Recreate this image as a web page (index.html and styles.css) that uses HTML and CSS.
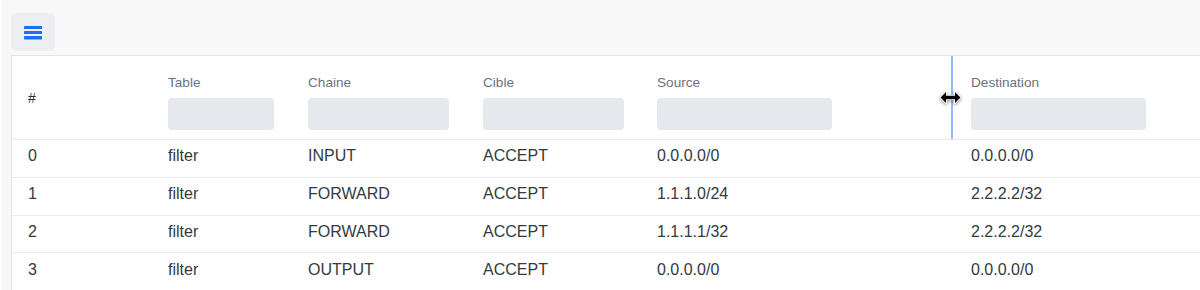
FILE: index.html
```html
<!DOCTYPE html>
<html lang="fr">
<head>
<meta charset="utf-8">
<title>Règles</title>
<link rel="stylesheet" href="styles.css">
</head>
<body>
<div class="page">
  <div class="toolbar">
    <button class="menu-btn" type="button" aria-label="Menu">
      <svg width="18" height="14" viewBox="0 0 18 14" aria-hidden="true">
        <rect x="0" y="0" width="18" height="3" rx="0.6" fill="#1d6ff2"/>
        <rect x="0" y="5" width="18" height="3" rx="0.6" fill="#1d6ff2"/>
        <rect x="0" y="10" width="18" height="3.4" rx="0.6" fill="#1d6ff2"/>
      </svg>
    </button>
  </div>
  <div class="table-wrap">
    <table class="rules">
      <colgroup>
        <col class="c-num"><col class="c-table"><col class="c-chain"><col class="c-target"><col class="c-source"><col class="c-dest">
      </colgroup>
      <thead>
        <tr>
          <th class="th-num">#</th>
          <th><div class="label">Table</div><div class="filter f-table"></div></th>
          <th><div class="label">Chaine</div><div class="filter f-chain"></div></th>
          <th><div class="label">Cible</div><div class="filter f-target"></div></th>
          <th class="th-resize"><div class="label">Source</div><div class="filter f-source"></div>
            <span class="resizer"></span>
            <svg class="cursor" width="23" height="15" viewBox="0 0 23 15" aria-hidden="true">
              <path d="M1.5 7.5 L7 2 L7 5.8 L16 5.8 L16 2 L21.5 7.5 L16 13 L16 9.2 L7 9.2 L7 13 Z" fill="#000" stroke="#fff" stroke-width="2" paint-order="stroke" stroke-linejoin="round"/>
            </svg>
          </th>
          <th><div class="label">Destination</div><div class="filter f-dest"></div></th>
        </tr>
      </thead>
      <tbody>
        <tr><td>0</td><td>filter</td><td>INPUT</td><td>ACCEPT</td><td>0.0.0.0/0</td><td>0.0.0.0/0</td></tr>
        <tr><td>1</td><td>filter</td><td>FORWARD</td><td>ACCEPT</td><td>1.1.1.0/24</td><td>2.2.2.2/32</td></tr>
        <tr><td>2</td><td>filter</td><td>FORWARD</td><td>ACCEPT</td><td>1.1.1.1/32</td><td>2.2.2.2/32</td></tr>
        <tr><td>3</td><td>filter</td><td>OUTPUT</td><td>ACCEPT</td><td>0.0.0.0/0</td><td>0.0.0.0/0</td></tr>
      </tbody>
    </table>
  </div>
</div>
</body>
</html>
```

FILE: styles.css
```css
html, body {
  margin: 0;
  padding: 0;
}

body {
  background: #f8f8f9;
  border-left: 2px solid #fdfdfd;
  font-family: "Liberation Sans", Arial, Helvetica, sans-serif;
  color: #343a40;
  overflow: hidden;
  height: 290px;
}

.page {
  padding: 13px 0 0 9px;
}

.toolbar {
  display: flex;
  margin-bottom: 4px;
}

.menu-btn {
  width: 44px;
  height: 38px;
  border: none;
  border-radius: 5px;
  background: #eceef1;
  display: flex;
  align-items: center;
  justify-content: center;
  padding: 0;
  margin: 0;
}

.menu-btn svg {
  display: block;
  margin-top: 1px;
}

.table-wrap {
  background: #fff;
  border-top: 1px solid #e2e4e7;
  border-left: 1px solid #e2e4e7;
  width: 1300px;
}

.rules {
  border-collapse: separate;
  border-spacing: 0;
  table-layout: fixed;
  width: 1300px;
}

.c-num { width: 140px; }
.c-table { width: 140px; }
.c-chain { width: 175px; }
.c-target { width: 174px; }
.c-source { width: 314px; }
.c-dest { width: 357px; }

.rules th {
  text-align: left;
  font-weight: normal;
  vertical-align: top;
  padding: 16px 16px 9px;
  border-bottom: 1px solid #e5e7ea;
}

.rules th.th-num {
  vertical-align: middle;
  font-size: 14px;
  color: #2b3036;
  padding-top: 9px;
}

.label {
  font-size: 13.6px;
  line-height: 21px;
  color: #6c737d;
  margin-bottom: 5px;
  white-space: nowrap;
}

.filter {
  height: 32px;
  border-radius: 4px;
  background: #e5e8ec;
}

.f-table { width: 106px; }
.f-chain { width: 141px; }
.f-target { width: 141px; }
.f-source { width: 175px; }
.f-dest { width: 175px; }

.th-resize {
  position: relative;
}

.resizer {
  position: absolute;
  top: 0;
  bottom: 0;
  right: 2px;
  width: 2px;
  background: #8fb8f5;
}

.cursor {
  position: absolute;
  top: 34px;
  right: -7px;
  filter: drop-shadow(0 1px 1.5px rgba(0, 0, 0, 0.45));
}

.rules td {
  font-size: 16px;
  line-height: 24px;
  padding: 4.2px 16px 8.6px;
  border-bottom: 1px solid #e9ebee;
  white-space: nowrap;
  color: #343a40;
}
```
